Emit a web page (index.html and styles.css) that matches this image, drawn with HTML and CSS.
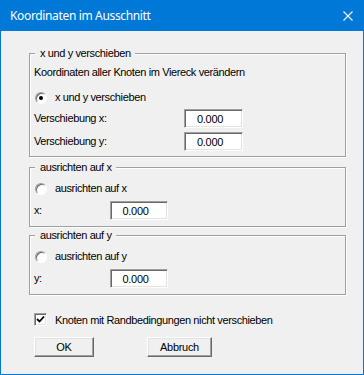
FILE: index.html
```html
<!DOCTYPE html>
<html lang="de">
<head>
    <meta charset="UTF-8">
    <title>Koordinaten im Ausschnitt</title>
    <link rel="stylesheet" href="styles.css">
</head>
<body>

<div class="dialog">
    <div class="titlebar">
        <span class="title">Koordinaten im Ausschnitt</span>
        <svg class="close" width="10" height="10" viewBox="0 0 10 10">
            <path d="M0.5 0.5 L9.5 9.5 M9.5 0.5 L0.5 9.5" stroke="#fff" stroke-width="1.1" fill="none"/>
        </svg>
    </div>

    <div class="client">
        <!-- x und y verschieben -->
        <div class="group group-shift">
            <div class="group-title">x und y verschieben</div>
            <div class="hint">Koordinaten aller Knoten im Viereck verändern</div>
            <label class="radio-row"><span class="radio checked"></span>x und y verschieben</label>
            <div class="field-row first">
                <span>Verschiebung x:</span>
                <input class="num" type="text" value="0.000">
            </div>
            <div class="field-row second">
                <span>Verschiebung y:</span>
                <input class="num" type="text" value="0.000">
            </div>
        </div>

        <!-- ausrichten auf x -->
        <div class="group group-align first-align">
            <div class="group-title">ausrichten auf x</div>
            <label class="radio-row"><span class="radio"></span>ausrichten auf x</label>
            <div class="field-row">
                <span>x:</span>
                <input class="num" type="text" value="0.000">
            </div>
        </div>

        <!-- ausrichten auf y -->
        <div class="group group-align second-align">
            <div class="group-title">ausrichten auf y</div>
            <label class="radio-row"><span class="radio"></span>ausrichten auf y</label>
            <div class="field-row">
                <span>y:</span>
                <input class="num" type="text" value="0.000">
            </div>
        </div>

        <label class="check-row">
            <span class="checkbox">
                <svg width="9" height="9" viewBox="0 0 9 9">
                    <path d="M1 4 L3.5 6.5 L8 1.5" stroke="#000" stroke-width="1.8" fill="none"/>
                </svg>
            </span>
            Knoten mit Randbedingungen nicht verschieben
        </label>

        <div class="buttons">
            <button type="button" class="btn btn-ok">OK</button>
            <button type="button" class="btn btn-cancel">Abbruch</button>
        </div>
    </div>
</div>

</body>
</html>
```

FILE: styles.css
```css
/* Grundlayout */
body {
    margin: 0;
    font-family: "Liberation Sans", Arial, sans-serif;
    font-size: 11px;
    letter-spacing: -0.38px;
    color: #000;
}

.dialog {
    width: 364px;
    height: 375px;
    box-sizing: border-box;
    border: 1px solid #0078d7;
    border-top: none;
    background-color: #f0f0f0;
    display: flex;
    flex-direction: column;
}

/* Titelleiste */
.titlebar {
    height: 31px;
    background-color: #0078d7;
    display: flex;
    align-items: center;
    justify-content: space-between;
    padding: 0 10px 0 9px;
}

.title {
    font-family: "Noto Sans", "Open Sans", sans-serif;
    font-size: 12px;
    letter-spacing: -0.35px;
    color: #fff;
}

.close {
    display: block;
}

/* Inhalt */
.client {
    padding: 22px 17px 0 28px;
}

.group {
    border: 1px solid #a0a0a0;
    box-shadow: inset 1px 1px 0 #fff, 1px 1px 0 #fff;
    padding: 0 4px 5px 4px;
    line-height: 13px;
}

.group-title {
    width: fit-content;
    margin: -7px 0 0 1px;
    padding: 0 4px 0 5px;
    background-color: #f0f0f0;
    height: 13px;
}

.hint {
    margin-top: 6px;
    height: 13px;
}

.group-shift .radio-row {
    margin-top: 12px;
}

.group-align {
    padding-bottom: 6px;
}

.first-align {
    margin-top: 10px;
}

.second-align {
    margin-top: 8px;
}

.group-align .radio-row {
    margin-top: 8px;
}

/* Optionsfeld */
.radio-row {
    display: flex;
    align-items: center;
    gap: 8px;
    height: 13px;
    margin-left: 1px;
}

.radio {
    width: 12px;
    height: 12px;
    box-sizing: border-box;
    border-radius: 50%;
    border: 1px solid;
    border-color: #a0a0a0 #fff #fff #a0a0a0;
    box-shadow: inset 1px 1px 0 #696969;
    background-color: #fff;
    display: flex;
    align-items: center;
    justify-content: center;
}

.radio.checked::after {
    content: "";
    width: 4px;
    height: 4px;
    border-radius: 50%;
    background-color: #000;
}

/* Eingabezeilen */
.field-row {
    display: grid;
    grid-template-columns: 76px 58px;
    align-items: center;
    height: 19px;
    margin-top: 6px;
}

.group-shift .field-row {
    grid-template-columns: 150px 59px;
}

.group-shift .field-row.first {
    margin-top: 5px;
}

.group-shift .field-row.second {
    margin-top: 4px;
}

.num {
    width: 100%;
    height: 19px;
    box-sizing: border-box;
    border: 1px solid;
    border-color: #a0a0a0 #fff #fff #a0a0a0;
    box-shadow: inset 1px 1px 0 #696969, inset -1px -1px 0 #e3e3e3;
    background-color: #fff;
    font-family: "Liberation Sans", Arial, sans-serif;
    font-size: 11px;
    letter-spacing: -0.3px;
    color: #000;
    text-align: center;
    padding: 0 7px 0 0;
    margin: 0;
    outline: none;
}

/* Kontrollkästchen */
.check-row {
    display: flex;
    align-items: center;
    gap: 8px;
    height: 13px;
    margin: 18px 0 0 5px;
}

.checkbox {
    width: 13px;
    height: 13px;
    box-sizing: border-box;
    border: 1px solid;
    border-color: #a0a0a0 #fff #fff #a0a0a0;
    box-shadow: inset 1px 1px 0 #696969, inset -1px -1px 0 #e3e3e3;
    background-color: #fff;
    display: flex;
    align-items: center;
    justify-content: center;
}

.checkbox svg {
    display: block;
}

/* Schaltflächen */
.buttons {
    display: flex;
    gap: 53px;
    margin: 11px 0 0 5px;
}

.btn {
    height: 20px;
    box-sizing: border-box;
    border: 1px solid;
    border-color: #fff #696969 #696969 #fff;
    box-shadow: inset -1px -1px 0 #a0a0a0, inset 1px 1px 0 #e3e3e3;
    background-color: #f0f0f0;
    font-family: "Liberation Sans", Arial, sans-serif;
    font-size: 11px;
    letter-spacing: -0.3px;
    color: #000;
    padding: 0;
}

.btn-ok {
    width: 60px;
}

.btn-cancel {
    width: 65px;
}
```
